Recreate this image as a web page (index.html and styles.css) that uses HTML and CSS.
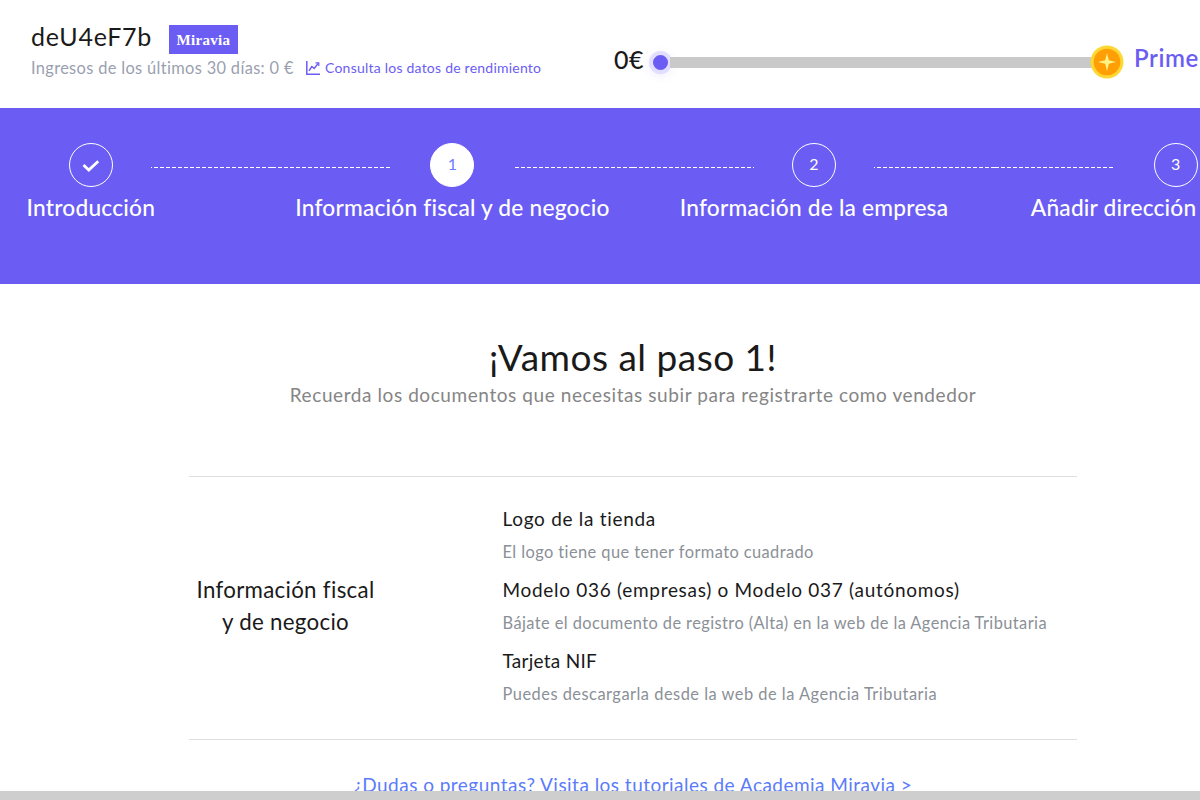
FILE: index.html
```
<!DOCTYPE html>
<html lang="es">
<head>
    <meta charset="UTF-8">
    <title>Miravia</title>
    <link rel="stylesheet" href="styles.css">
</head>
<body>
    <div class="header">
        <div class="shop">
            <div class="shop-top">
                <span class="shop-name">deU4eF7b</span>
                <span class="badge">Miravia</span>
            </div>
            <div class="shop-info">
                <span class="income">Ingresos de los últimos 30 días: 0 €</span>
                <svg class="chart" width="14" height="14" viewBox="0 0 14 14" fill="none" stroke="#6b5df3">
                    <path d="M.8 0v13.2H14" stroke-width="1.5"/>
                    <path d="M3 9.800l2.800-4.300 2.400 1.900 4-5" stroke-width="1.5"/>
                    <path d="M9.500 1.800h3.300v3.200" stroke-width="1.2"/>
                </svg>
                <a class="link">Consulta los datos de rendimiento</a>
            </div>
        </div>
        <div class="progress">
            <span class="amount">0€</span>
            <div class="bar">
                <div class="knob"></div>
                <div class="track"></div>
                <svg class="coin" width="34" height="34" viewBox="0 0 34 34">
                    <circle cx="17" cy="17" r="16.5" fill="#fdd835"/>
                    <circle cx="17" cy="17" r="13.3" fill="#ff9f05"/>
                    <path d="M17 8L18.800 15.200L26 17L18.800 18.800L17 26L15.200 18.800L8 17L15.200 15.200z" fill="#fff388"/>
                </svg>
            </div>
            <span class="prime">Prime</span>
        </div>
    </div>

    <div class="steps">
        <div class="step first">
            <div class="step-line">
                <div class="circle">
                    <svg width="18" height="14" viewBox="0 0 18 14" fill="none" stroke="#fff" stroke-width="2.8">
                        <path d="M1.500 6l5.300 5L16.200 2.200"/>
                    </svg>
                </div>
            </div>
            <div class="label">Introducción</div>
        </div>
        <div class="step">
            <div class="step-line"><div class="circle active">1</div></div>
            <div class="label">Información fiscal y de negocio</div>
        </div>
        <div class="step">
            <div class="step-line"><div class="circle">2</div></div>
            <div class="label">Información de la empresa</div>
        </div>
        <div class="step last">
            <div class="step-line"><div class="circle">3</div></div>
            <div class="label">Añadir dirección</div>
        </div>
    </div>

    <div class="main">
        <h1>¡Vamos al paso 1!</h1>
        <p class="sub">Recuerda los documentos que necesitas subir para registrarte como vendedor</p>
        <div class="docs">
            <div class="docs-name">Información fiscal<br>y de negocio</div>
            <dl class="docs-list">
                <dt>Logo de la tienda</dt>
                <dd>El logo tiene que tener formato cuadrado</dd>
                <dt>Modelo 036 (empresas) o Modelo 037 (autónomos)</dt>
                <dd>Bájate el documento de registro (Alta) en la web de la Agencia Tributaria</dd>
                <dt class="short">Tarjeta NIF</dt>
                <dd class="wide">Puedes descargarla desde la web de la Agencia Tributaria</dd>
            </dl>
        </div>
        <a class="help">¿Dudas o preguntas? Visita los tutoriales de Academia Miravia &gt;</a>
    </div>
    <div class="footer"></div>
</body>
</html>
```
FILE: styles.css
```
* {margin: 0;padding: 0;box-sizing: border-box;}

body{
    display: flex;
    flex-direction: column;
    width: 1200px;
    height: 800px;
    overflow: hidden;
    background-color: #fff;
    color: #1a1a1a;
    font-family: Lato, "Open Sans", sans-serif;
    white-space: nowrap;
}

/* header */
.header{
    display: flex;
    flex: none;
    height: 108px;
    padding-left: 31px;
}
.shop{
    width: 583px;
    padding-top: 22px;
}
.shop-top{
    display: flex;
    height: 32px;
}
.shop-name{
    width: 138px;
    font-size: 25px;
    line-height: 29px;
    letter-spacing: .75px;
}
.badge{
    width: 69px;
    height: 29px;
    margin-top: 3px;
    background-color: #6b5df3;
    color: #fff;
    font: bold 15px/30px "Liberation Serif", serif;
    letter-spacing: .3px;
    text-align: center;
}
.shop-info{
    display: flex;
    height: 27px;
    line-height: 27px;
}
.income{
    width: 275px;
    color: #9a9fb0;
    font-size: 16.4px;
    letter-spacing: .34px;
}
.chart{
    margin: 7px 5px 0 0;
}
.link{
    color: #6b5df3;
    font-size: 14px;
    line-height: 28px;
    letter-spacing: .225px;
}
.progress{
    display: flex;
    height: 108px;
}
.amount{
    width: 35px;
    padding-top: 43px;
    font-size: 25px;
    font-weight: 500;
    line-height: 32px;
    letter-spacing: .6px;
}
.bar{
    display: flex;
    align-items: center;
    width: 475px;
    height: 34px;
    margin-top: 45px;
}
.knob{
    width: 23px;
    height: 23px;
    border: 4px solid #e2deff;
    border-radius: 50%;
    background-color: #6b5df3;
    box-shadow: 0 2px 8px rgba(107,93,243,.1);
}
.track{
    flex: 1;
    height: 11px;
    margin: 0 -3px 0 -2px;
    background-color: #c9c9c9;
}
.coin{
    position: relative;
    flex: none;
}
.prime{
    padding: 42px 0 0 10px;
    color: #6b5df3;
    font-size: 24px;
    font-weight: 600;
    line-height: 32px;
    letter-spacing: .6px;
}

/* steps */
.steps{
    display: flex;
    flex: none;
    height: 176px;
    padding-top: 35px;
    overflow: hidden;
    background-color: #6b5df3;
    color: #fff;
}
.step{
    flex: none;
    width: 361.6px;
    text-align: center;
}
.first{
    margin-left: -90px;
}
.step-line{
    display: flex;
    align-items: center;
    gap: 38.400px;
    height: 44px;
}
.step-line:before,
.step-line:after{
    content: "";
    flex: 1;
    height: 1px;
    margin-top: 4px;
    background: repeating-linear-gradient(to right, #fff 0, #fff 4px, transparent 4px, transparent 6px);
}
.step-line:after{
    background: repeating-linear-gradient(to left, #fff 0, #fff 4px, transparent 4px, transparent 6px);
}
.first .step-line:before{
    visibility: hidden;
}
.circle{
    display: flex;
    align-items: center;
    justify-content: center;
    width: 44px;
    height: 44px;
    padding-bottom: 3px;
    border: 1px solid #fff;
    border-radius: 50%;
    font-size: 16px;
}
.circle svg{
    margin-top: 5px;
}
.active{
    background-color: #fff;
    color: #6b7cff;
}
.label{
    height: 44px;
    font-size: 22.7px;
    font-weight: 500;
    line-height: 42px;
    letter-spacing: .22px;
}
.last .label{
    padding-left: 36px;
    text-align: left;
}

/* content */
.main{
    flex: none;
    height: 507px;
    padding: 52px 0 0 66px;
    overflow: hidden;
    text-align: center;
}
h1{
    font-size: 37px;
    font-weight: 400;
    line-height: 42px;
    letter-spacing: .5px;
}
.sub{
    color: #858585;
    font-size: 19px;
    line-height: 34px;
    letter-spacing: .58px;
}
.docs{
    display: flex;
    gap: 120.5px;
    width: 888px;
    height: 264px;
    margin: 63.500px auto 30px;
    border-top: 1px solid #dedede;
    border-bottom: 1px solid #dedede;
}
.docs-name{
    width: 193px;
    padding-top: 97px;
    font-size: 22.3px;
    line-height: 32.4px;
    letter-spacing: .3px;
}
.docs-list{
    padding-top: 27px;
    text-align: left;
}
dt{
    height: 31px;
    font-size: 19px;
    line-height: 30px;
    letter-spacing: .7px;
}
.short{
    letter-spacing: .26px;
}
dd{
    height: 40.300px;
    color: #8b9097;
    font-size: 16.4px;
    line-height: 33px;
    letter-spacing: .42px;
}
.wide{
    letter-spacing: .5px;
}
.help{
    color: #5b7cfa;
    font-size: 19px;
    line-height: 30px;
    letter-spacing: .47px;
}
.footer{
    flex: none;
    height: 9px;
    background-color: #cecece;
}
```
